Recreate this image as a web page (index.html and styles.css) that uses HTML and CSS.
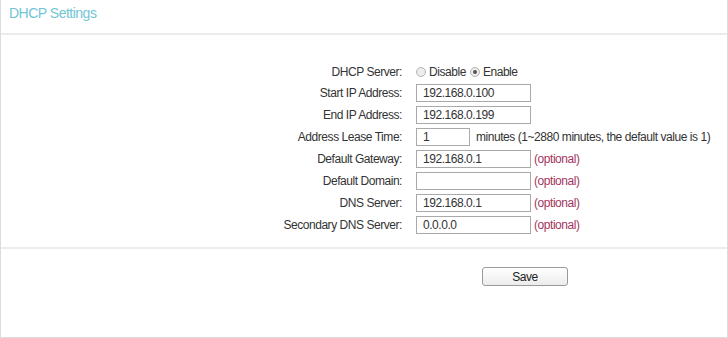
FILE: index.html
```html
<!DOCTYPE html>
<html lang="en">
<head>
    <meta charset="UTF-8">
    <title>DHCP Settings</title>
    <link rel="stylesheet" href="styles.css">
</head>
<body>
    <div class="panel">
        <div class="panel-head">
            <h2>DHCP Settings</h2>
        </div>

        <div class="panel-body">
            <div class="row row-radio">
                <label class="label">DHCP Server:</label>
                <div class="field">
                    <span class="radio"></span><span class="radio-text">Disable</span>
                    <span class="radio checked"></span><span class="radio-text">Enable</span>
                </div>
            </div>
            <div class="row">
                <label class="label">Start IP Address:</label>
                <div class="field"><input class="text" type="text" value="192.168.0.100"></div>
            </div>
            <div class="row">
                <label class="label">End IP Address:</label>
                <div class="field"><input class="text" type="text" value="192.168.0.199"></div>
            </div>
            <div class="row">
                <label class="label">Address Lease Time:</label>
                <div class="field">
                    <input class="text short" type="text" value="1">
                    <span class="hint">minutes (1~2880 minutes, the default value is 1)</span>
                </div>
            </div>
            <div class="row">
                <label class="label">Default Gateway:</label>
                <div class="field"><input class="text" type="text" value="192.168.0.1"><span class="optional">(optional)</span></div>
            </div>
            <div class="row">
                <label class="label">Default Domain:</label>
                <div class="field"><input class="text" type="text" value=""><span class="optional">(optional)</span></div>
            </div>
            <div class="row">
                <label class="label">DNS Server:</label>
                <div class="field"><input class="text" type="text" value="192.168.0.1"><span class="optional">(optional)</span></div>
            </div>
            <div class="row">
                <label class="label">Secondary DNS Server:</label>
                <div class="field"><input class="text" type="text" value="0.0.0.0"><span class="optional">(optional)</span></div>
            </div>
        </div>

        <div class="panel-foot">
            <button class="save-button">Save</button>
        </div>
    </div>
</body>
</html>
```

FILE: styles.css
```css
body {
    margin: 0;
    font-family: "Liberation Sans", Arial, sans-serif;
    font-size: 12px;
    letter-spacing: -0.45px;
    color: #333;
    background-color: #fff;
}

.panel {
    height: 337px;
    border: 1px solid #dcdcdc;
    border-top: none;
}

.panel-head {
    height: 33px;
    border-bottom: 2px solid #ececec;
}

.panel-head h2 {
    margin: 0;
    padding: 5px 0 0 8px;
    font-size: 14px;
    font-weight: normal;
    letter-spacing: -0.5px;
    line-height: 16px;
    color: #72c5d6;
}

.panel-body {
    padding: 27px 0 11px;
    border-bottom: 2px solid #ececec;
}

.row {
    display: flex;
    align-items: center;
    height: 22px;
}

.row-radio {
    height: 20px;
}

.label {
    width: 401px;
    text-align: right;
    flex-shrink: 0;
}

.field {
    display: flex;
    align-items: center;
    margin-left: 14px;
    white-space: nowrap;
}

.radio {
    width: 10px;
    height: 10px;
    border: 1px solid #b5b5b5;
    border-radius: 50%;
    background-color: #ececec;
    box-sizing: border-box;
    position: relative;
}

.radio.checked::after {
    content: "";
    position: absolute;
    left: 2px;
    top: 2px;
    width: 4px;
    height: 4px;
    border-radius: 50%;
    background-color: #555;
}

.radio-text {
    margin: 0 4px 0 3px;
}

.text {
    width: 115px;
    height: 18px;
    box-sizing: border-box;
    border: 1px solid #a9a9a9;
    padding: 0 6px;
    font-family: "Liberation Sans", Arial, sans-serif;
    font-size: 12px;
    letter-spacing: -0.45px;
    color: #333;
    margin: 0;
}

.text.short {
    width: 54px;
}

.hint {
    margin-left: 6px;
}

.optional {
    margin-left: 3px;
    color: #a4365e;
}

.panel-foot {
    padding-top: 18px;
}

.save-button {
    margin-left: 481px;
    width: 86px;
    height: 19px;
    border: 1px solid #9a9a9a;
    border-radius: 3px;
    background: linear-gradient(#ffffff, #ececec);
    font-family: "Liberation Sans", Arial, sans-serif;
    font-size: 12px;
    letter-spacing: -0.45px;
    color: #222;
    padding: 0;
}
```
